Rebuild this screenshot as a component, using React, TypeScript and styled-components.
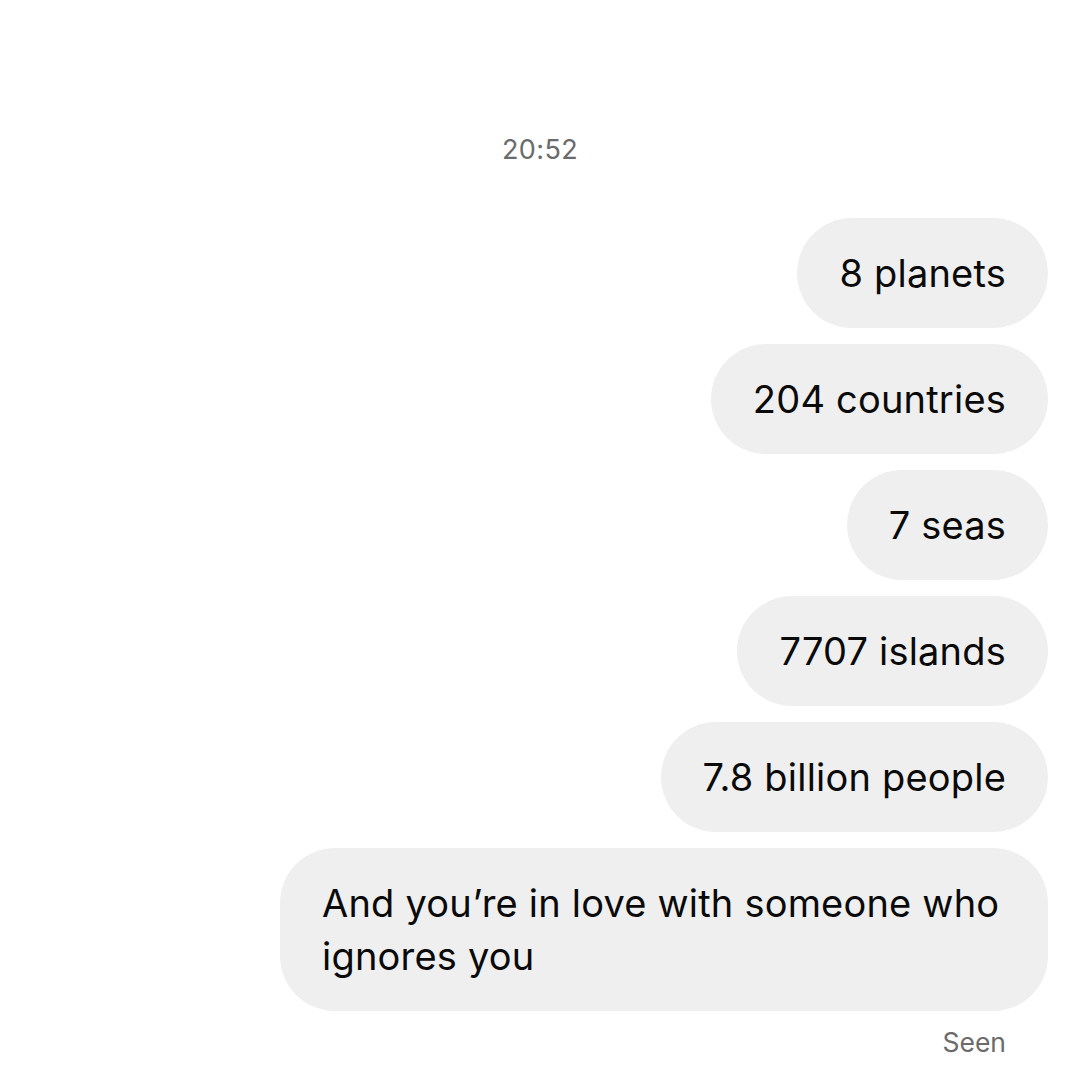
import React from "react";
import styled, { createGlobalStyle } from "styled-components";

const GlobalStyle = createGlobalStyle`
    html, body {
        margin: 0;
        padding: 0;
        background: #ffffff;
    }
    body {
        font-family: Inter, "Noto Sans", "Liberation Sans", sans-serif;
        -webkit-font-smoothing: antialiased;
    }
`;

const Screen = styled.div`
    width: 1080px;
    height: 1080px;
    box-sizing: border-box;
    padding: 133px 32px 0 32px;
    display: flex;
    flex-direction: column;
    overflow: hidden;
`;

const Timestamp = styled.div`
    align-self: center;
    font-size: 27px;
    line-height: 34px;
    color: #6b6b6b;
    letter-spacing: 0.4px;
    margin-bottom: 51px;
`;

const Thread = styled.div`
    display: flex;
    flex-direction: column;
    align-items: flex-end;
    gap: 16px;
`;

const Bubble = styled.div<{ $wide?: boolean }>`
    box-sizing: border-box;
    max-width: ${({ $wide }) => ($wide ? "768px" : "none")};
    padding: 28.5px 42px 28.5px 42px;
    background: #efefef;
    border-radius: 55px;
    font-size: 38px;
    line-height: 53px;
    color: #0a0a0a;
    letter-spacing: 0.2px;
`;

const Seen = styled.div`
    align-self: flex-end;
    margin-top: 15px;
    margin-right: 42px;
    font-size: 26.5px;
    line-height: 32px;
    color: #6b6b6b;
`;

const messages = [
    "8 planets",
    "204 countries",
    "7 seas",
    "7707 islands",
    "7.8 billion people",
];

const App: React.FC = () => {
    return (
        <>
            <GlobalStyle />
            <Screen>
                <Timestamp>20:52</Timestamp>
                <Thread>
                    {messages.map((m) => (
                        <Bubble key={m}>{m}</Bubble>
                    ))}
                    <Bubble $wide>And you’re in love with someone who ignores you</Bubble>
                </Thread>
                <Seen>Seen</Seen>
            </Screen>
        </>
    );
};

export default App;
